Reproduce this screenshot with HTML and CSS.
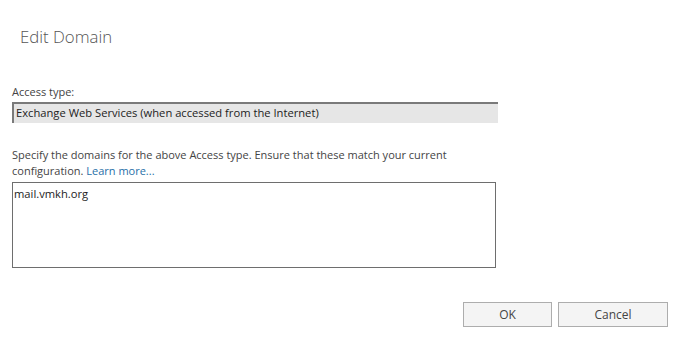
FILE: index.html
```html
<!DOCTYPE html>
<html>
<head>
<meta charset="utf-8">
<link rel="stylesheet" href="styles.css">
</head>
<body>
<div class="dialog">
  <h1 class="title">Edit Domain</h1>
  <div class="field">
    <label class="label">Access type:</label>
    <div class="readonly">Exchange Web Services (when accessed from the Internet)</div>
  </div>
  <div class="field domains">
    <p class="desc"><span>Specify the domains for the above Access type. Ensure that these match your current</span> <span>configuration.</span> <a class="link" href="#">Learn more...</a></p>
    <div class="textarea">mail.vmkh.org</div>
  </div>
  <div class="buttons">
    <button class="btn ok">OK</button>
    <button class="btn cancel">Cancel</button>
  </div>
</div>
</body>
</html>
```
FILE: styles.css
```css
* { box-sizing: border-box; }
html, body { margin: 0; background: #fff; }
body {
  font-family: "Open Sans", "Noto Sans", sans-serif;
  color: #333;
  width: 700px;
  height: 360px;
}
.dialog {
  padding: 26px 0 0 12px;
  display: flex;
  flex-direction: column;
}
.title {
  margin: 0 0 0 8px;
  font-weight: 300;
  font-size: 16.8px;
  line-height: 22px;
  color: #555;
}
.field {
  margin-top: 37px;
  display: flex;
  flex-direction: column;
}
.label {
  font-size: 11px;
  line-height: 14px;
  color: #444;
  margin-bottom: 3px;
}
.readonly {
  width: 486px;
  height: 21px;
  background: #e6e6e6;
  border-top: 2px solid #7a7a7a;
  border-left: 2px solid #7a7a7a;
  font-size: 11.2px;
  line-height: 18px;
  padding-left: 2px;
  color: #222;
}
.domains { margin-top: 24px; }
.desc {
  margin: 0;
  width: 490px;
  font-size: 11px;
  line-height: 16px;
  color: #444;
}
.link { color: #1f6fa8; text-decoration: none; }
.textarea {
  margin-top: 3px;
  width: 484px;
  height: 86px;
  border: 1px solid #6e6e6e;
  font-size: 11.2px;
  line-height: 18px;
  padding: 2px 1px;
  color: #222;
}
.buttons {
  margin-top: 34px;
  margin-right: 32px;
  display: flex;
  justify-content: flex-end;
  gap: 6px;
}
.btn {
  height: 25px;
  background: #f4f4f4;
  border: 1px solid #adadad;
  font-family: inherit;
  font-size: 12px;
  color: #444;
  padding: 0;
}
.ok { width: 89px; }
.cancel { width: 110px; }
```
